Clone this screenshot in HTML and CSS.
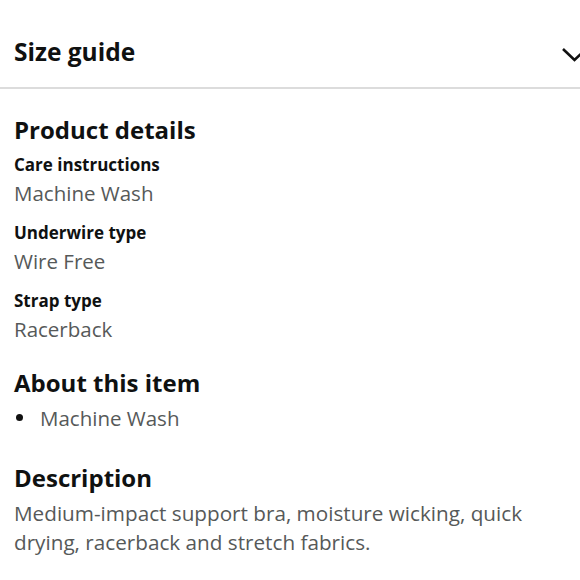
FILE: index.html
```html
<!DOCTYPE html>
<html>
<head>
<meta charset="utf-8">
<link rel="stylesheet" href="styles.css">
</head>
<body>
<div class="page">
  <div class="accordion">
    <span class="acc-title">Size guide</span>
    <svg class="chev" width="28" height="15" viewBox="0 0 28 15"><path d="M2 2 L13.5 13 L25 2" fill="none" stroke="#111" stroke-width="2.6"/></svg>
  </div>
  <div class="content">
    <h2 class="heading h-product">Product details</h2>
    <div class="attr">
      <div class="label">Care instructions</div>
      <div class="value">Machine Wash</div>
    </div>
    <div class="attr">
      <div class="label">Underwire type</div>
      <div class="value">Wire Free</div>
    </div>
    <div class="attr">
      <div class="label">Strap type</div>
      <div class="value">Racerback</div>
    </div>
    <h2 class="heading h-about">About this item</h2>
    <ul class="bullets">
      <li>Machine Wash</li>
    </ul>
    <h2 class="heading h-desc">Description</h2>
    <p class="desc">Medium-impact support bra, moisture wicking, quick drying, racerback and stretch fabrics.</p>
  </div>
</div>
</body>
</html>
```
FILE: styles.css
```css
html, body { margin: 0; padding: 0; background: #fff; }
body { font-family: "Open Sans", "Noto Sans", sans-serif; color: #0f1111; width: 580px; overflow: hidden; }
.page { width: 580px; overflow: hidden; }
.accordion {
  display: flex; align-items: center; justify-content: space-between;
  padding: 36px 0 19px 14px;
  border-bottom: 2px solid #dcdcdc;
}
.acc-title { font-size: 24.5px; font-weight: 700; line-height: 32px; }
.chev { margin-right: -9px; margin-top: 5px; flex: none; }
.content { padding: 0 14px; }
.heading { font-size: 24px; font-weight: 700; margin: 0; line-height: 32px; }
.h-product { margin-top: 25px; }
.label { font-size: 17px; font-weight: 700; line-height: 26px; }
.value { font-size: 20.5px; color: #565959; line-height: 28px; margin-top: 1px; }
.attr { margin-top: 6px; }
.attr + .attr { margin-top: 13px; }
.h-about { margin-top: 24px; }
.bullets { margin: 5px 0 0; padding: 0; list-style: none; }
.bullets li { font-size: 20.5px; color: #565959; line-height: 28px; position: relative; padding-left: 26px; }
.bullets li::before { content: ""; position: absolute; left: 2px; top: 10px; width: 7px; height: 7px; border-radius: 50%; background: #111; }
.h-desc { margin-top: 30px; }
.desc { font-size: 20.7px; color: #565959; line-height: 29px; margin: 5px 0 0; }
```
